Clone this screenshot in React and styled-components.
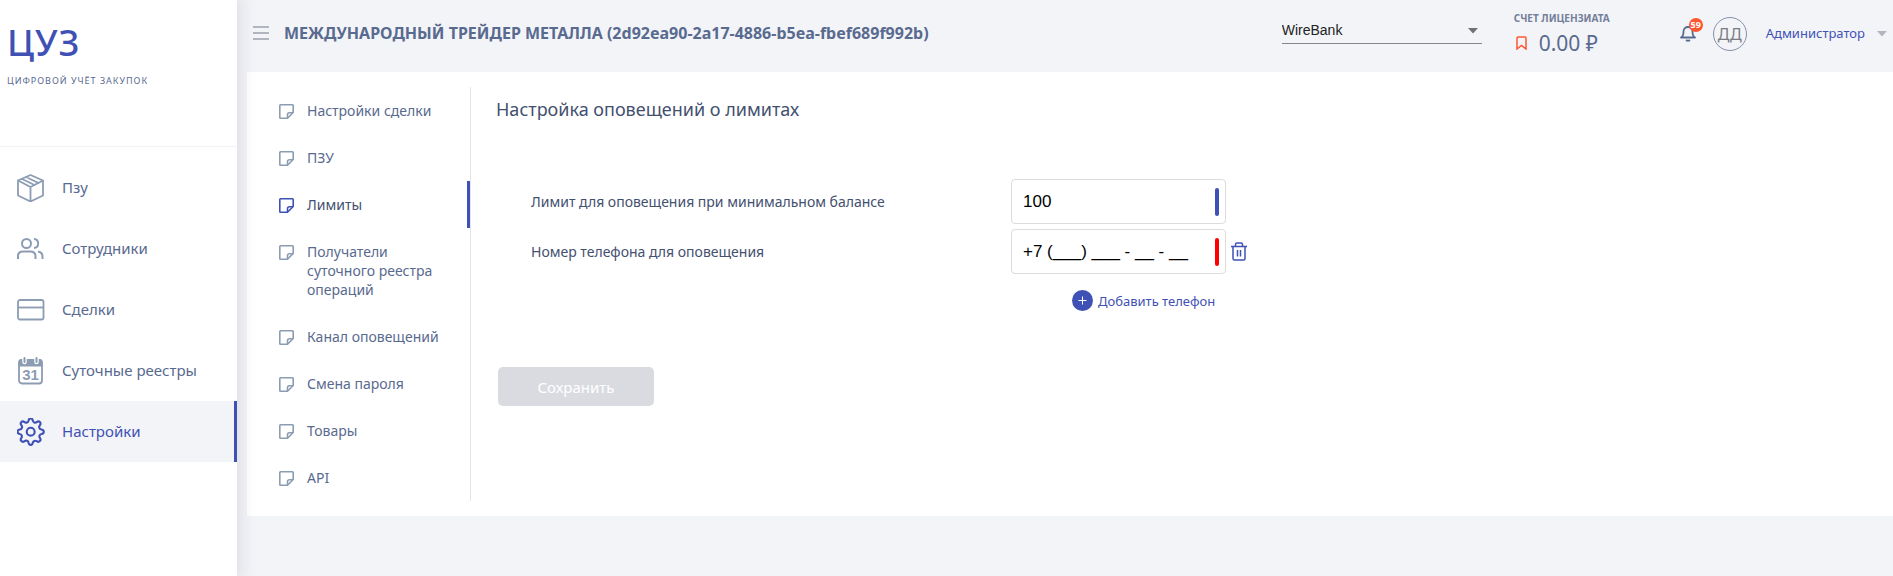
import React, {useState} from 'react';
import styled, { createGlobalStyle } from 'styled-components';

const blue = '#3f51b5';
const slate = '#596a8f';
const dark = '#43506f';
const grey = '#8b9cb3';
const pageBg = '#f3f4f8';

const GlobalStyle = createGlobalStyle`
  * {
    box-sizing: border-box;
  }
  body {
    margin: 0;
    background: ${pageBg};
    color: ${slate};
    font-family: 'Noto Sans', 'Open Sans', sans-serif;
    font-size: 14px;
    line-height: 19px;
  }
  button, input, select {
    font-family: inherit;
  }
  a {
    color: inherit;
    text-decoration: none;
  }
`;

const Layout = styled.div`
  display: flex;
  min-height: 100vh;
`;

const Sidebar = styled.aside`
  position: relative;
  z-index: 1;
  flex: 0 0 237px;
  background: #fff;
  box-shadow: 0 0 16px 5px rgba(30, 30, 40, 0.09);
`;

const Brand = styled.div`
  height: 147px;
  padding: 19px 7px 0;
  border-bottom: 1px solid #f2f3f6;
`;

const Logo = styled.div`
  color: ${blue};
  font-size: 36px;
  font-weight: 500;
  line-height: 48px;
  letter-spacing: 1px;
`;

const Slogan = styled.div`
  margin-top: 4px;
  font-size: 9px;
  letter-spacing: 1px;
  text-transform: uppercase;
`;

const Menu = styled.nav`
  padding-top: 10px;
`;

const MenuItem = styled.a`
  display: flex;
  align-items: center;
  gap: 17px;
  height: 61px;
  padding-left: 17px;
  font-size: 15px;
  color: ${props => props.$active ? blue : slate};
  background: ${props => props.$active ? pageBg : 'none'};
  border-right: 3px solid ${props => props.$active ? blue : 'transparent'};

  svg {
    width: 28px;
    height: 28px;
    color: ${props => props.$active ? blue : grey};
  }
`;

const Main = styled.main`
  flex: 1;
  min-width: 0;
  padding-left: 10px;
`;

const TopBar = styled.header`
  display: flex;
  align-items: flex-start;
  height: 72px;
  padding-right: 6px;
`;

const Burger = styled.button`
  display: flex;
  margin: 26px 15px 0 6px;
  padding: 0;
  border: 0;
  background: none;
  color: #b0b5c0;
`;

const Company = styled.h1`
  flex: 1;
  margin: 24px 0 0;
  font-size: 16px;
  font-weight: 700;
  line-height: 19px;
  white-space: nowrap;
`;

const BankField = styled.div`
  position: relative;
  width: 200px;
  margin-top: 16px;

  svg {
    position: absolute;
    top: 12px;
    right: 4px;
    pointer-events: none;
  }
`;

const BankSelect = styled.select`
  width: 100%;
  height: 28px;
  padding: 0 24px 0 0;
  appearance: none;
  border: 0;
  border-bottom: 1px solid #85878c;
  background: none;
  color: #222;
  font-family: 'Liberation Sans', sans-serif;
  font-size: 14px;
`;

const Account = styled.div`
  width: 166px;
  margin: 10px 0 0 32px;
`;

const AccountTitle = styled.div`
  color: #747f9b;
  font-size: 10px;
  font-weight: 700;
  line-height: 16px;
`;

const Balance = styled.div`
  display: flex;
  align-items: center;
  gap: 12px;
  padding-left: 2px;
  font-size: 21px;
  line-height: 34px;
`;

const Bell = styled.button`
  position: relative;
  display: flex;
  margin-top: 24px;
  padding: 0;
  border: 0;
  background: none;
  color: ${slate};
`;

const Badge = styled.span`
  position: absolute;
  top: -6px;
  right: -7px;
  width: 14px;
  height: 14px;
  border-radius: 50%;
  background: #ff5630;
  color: #fff;
  font-size: 9px;
  font-weight: 700;
  line-height: 14px;
  text-align: center;
`;

const Avatar = styled.span`
  width: 34px;
  height: 34px;
  margin: 17px 19px 0 17px;
  border: 1px solid #8790ab;
  border-radius: 50%;
  color: #7a7c83;
  font-size: 16px;
  line-height: 32px;
  text-align: center;
`;

const UserButton = styled.button`
  display: flex;
  align-items: center;
  gap: 12px;
  margin-top: 24px;
  padding: 0;
  border: 0;
  background: none;
  color: ${blue};
  font-size: 13px;
  line-height: 19px;
`;

const Panel = styled.section`
  display: flex;
  padding: 15px 0;
  background: #fff;
`;

const SubMenu = styled.nav`
  flex: 0 0 224px;
  border-right: 1px solid #e3e4e8;
`;

const SubItem = styled.a`
  display: flex;
  gap: 13px;
  padding: 14px 24px 14px 32px;
  color: ${props => props.$active ? dark : slate};
  border-right: 3px solid ${props => props.$active ? blue : 'transparent'};

  svg {
    flex: none;
    margin-top: 3px;
    color: ${props => props.$active ? blue : grey};
  }
`;

const Content = styled.form`
  flex: 1;
  padding: 12px 25px 0;
  color: ${dark};
`;

const Title = styled.h2`
  margin: 0 0 60px;
  font-size: 18px;
  font-weight: 400;
  line-height: 20px;
`;

const Row = styled.div`
  display: grid;
  grid-template-columns: 480px 215px auto;
  align-items: center;
  justify-content: start;
  margin-bottom: 5px;
  padding-left: 35px;
`;

const Field = styled.div`
  position: relative;

  &::after {
    content: '';
    position: absolute;
    top: 9px;
    right: 7px;
    width: 4px;
    height: 28px;
    border-radius: 2px;
    background: ${props => props.$invalid ? '#f00' : blue};
  }
`;

const TextInput = styled.input`
  display: block;
  width: 100%;
  height: 45px;
  padding: 0 20px 0 11px;
  border: 1px solid #dcdcde;
  border-radius: 4px;
  background: #fff;
  color: #000;
  font-family: 'Liberation Sans', sans-serif;
  font-size: 17px;
`;

const TrashButton = styled.button`
  display: flex;
  padding: 0 0 0 5px;
  border: 0;
  background: none;
  color: ${blue};
`;

const AddButton = styled.button`
  display: flex;
  align-items: center;
  gap: 5px;
  margin: 16px 0 0 576px;
  padding: 0;
  border: 0;
  background: none;
  color: ${blue};
  font-size: 13px;
  line-height: 20px;
`;

const SaveButton = styled.button`
  display: block;
  width: 156px;
  height: 39px;
  margin: 56px 0 0 2px;
  border: 0;
  border-radius: 5px;
  background: #dadbe0;
  color: #fff;
  font-size: 15px;
`;

const PackageIcon = () => (
  <svg viewBox="0 0 28 28" fill="none" stroke="currentColor" strokeWidth="1.800" strokeLinejoin="round" strokeLinecap="round">
    <path d="M13.500 1L26 6.500v15L13.500 27.500 1 21.500v-15zM1 6.500L13.500 13 26 6.500M13.500 13v14M5 5l12.500 6M9 3l12.500 6"/>
  </svg>
);

const UsersIcon = () => (
  <svg viewBox="0 0 28 28" fill="none" stroke="currentColor" strokeWidth="2">
    <circle cx="9.500" cy="8.500" r="4.500"/>
    <path d="M1 24v-3c0-3 2-4.500 5-4.500h7c3 0 5.500 1.500 5.500 4.500v3M17 4c5.500.5 5.500 8.500 0 9M21 16.500c3 .5 4.500 2 4.500 5V24"/>
  </svg>
);

const CardIcon = () => (
  <svg viewBox="0 0 28 28" fill="none" stroke="currentColor" strokeWidth="1.800">
    <rect x="1" y="4" width="25.500" height="19.500" rx="2"/>
    <path d="M1 11.500h25.500"/>
  </svg>
);

const CalendarIcon = () => (
  <svg viewBox="0 0 28 28" fill="none" stroke="currentColor">
    <rect x="2" y="3" width="23" height="23.500" rx="3" strokeWidth="1.800"/>
    <path d="M1.500 9.500V5q0-3 3-3h18q3 0 3 3v4.500z" fill="currentColor" stroke="none"/>
    <path d="M7.500 0v5M19.500 0v5" stroke="#fff" strokeWidth="4.500" strokeLinecap="round"/>
    <path d="M7.500 1v4M19.500 1v4" strokeWidth="2" strokeLinecap="round"/>
    <text x="13.500" y="23" textAnchor="middle" fill="currentColor" stroke="none" fontFamily="Liberation Sans" fontWeight="700" fontSize="15">31</text>
  </svg>
);

// wavy outline of the cog, eight teeth
const GearIcon = () => (
  <svg viewBox="1 1 22.500 22.500" fill="none" stroke="currentColor" strokeWidth="1.700" strokeLinejoin="round">
    <circle cx="12" cy="12" r="3.200"/>
    <path d="M10.300 3.100c.4-2.400 3-2.400 3.400 0a2 2 0 0 0 3.100 1.200c2-1.400 4 .5 2.600 2.500a2 2 0 0 0 1.300 3.400c2.400.4 2.400 3.200 0 3.600a2 2 0 0 0-1.300 3.200c1.400 2-.6 4-2.600 2.600a2 2 0 0 0-3.100 1.300c-.4 2.400-3 2.400-3.400 0a2 2 0 0 0-3.200-1.300c-2 1.400-4-.6-2.600-2.600a2 2 0 0 0-1.300-3.200c-2.400-.4-2.400-3.200 0-3.600a2 2 0 0 0 1.300-3.400c-1.400-2 .6-3.900 2.600-2.500a2 2 0 0 0 3.200-1.200z"/>
  </svg>
);

const NoteIcon = () => (
  <svg width="15" height="15" viewBox="0 0 15 15" fill="none" stroke="currentColor" strokeWidth="1.600" strokeLinejoin="round">
    <path d="M1.500.8h12q.7 0 .7.700V8.500L8.500 14.200h-7q-.7 0-.7-.7v-12q0-.7.7-.7z"/>
    <path d="M14 8.700h-3.500q-2 0-2 2V14"/>
  </svg>
);

const Arrow = ({color}) => (
  <svg width="10" height="6" viewBox="0 0 10 6"><path d="M0 0h10L5 5.500z" fill={color}/></svg>
);

const menu = [
  {name: 'Пзу', icon: PackageIcon},
  {name: 'Сотрудники', icon: UsersIcon},
  {name: 'Сделки', icon: CardIcon},
  {name: 'Суточные реестры', icon: CalendarIcon},
  {name: 'Настройки', icon: GearIcon, active: true},
];

const sections = [
  'Настройки сделки',
  'ПЗУ',
  'Лимиты',
  'Получатели суточного реестра операций',
  'Канал оповещений',
  'Смена пароля',
  'Товары',
  'API',
];

const App = () => {
  const [section, setSection] = useState('Лимиты');
  const [limit, setLimit] = useState('100');
  const [phone, setPhone] = useState('+7 (___) ___ - __ - __');

  return (
    <Layout>
      <GlobalStyle />
      <Sidebar>
        <Brand>
          <Logo>ЦУЗ</Logo>
          <Slogan>Цифровой учёт закупок</Slogan>
        </Brand>
        <Menu>
          {menu.map(({name, icon: Icon, active}) => (
            <MenuItem key={name} href="#" $active={active}><Icon />{name}</MenuItem>
          ))}
        </Menu>
      </Sidebar>
      <Main>
        <TopBar>
          <Burger type="button" aria-label="Меню">
            <svg width="16" height="14" viewBox="0 0 16 14" stroke="currentColor" strokeWidth="2"><path d="M0 1h16M0 7h16M0 13h16"/></svg>
          </Burger>
          <Company>МЕЖДУНАРОДНЫЙ ТРЕЙДЕР МЕТАЛЛА (2d92ea90-2a17-4886-b5ea-fbef689f992b)</Company>
          <BankField>
            <BankSelect aria-label="Банк">
              <option>WireBank</option>
            </BankSelect>
            <Arrow color="#6f7072" />
          </BankField>
          <Account>
            <AccountTitle>СЧЕТ ЛИЦЕНЗИАТА</AccountTitle>
            <Balance>
              <svg width="11" height="14" viewBox="0 0 11 14" fill="none" stroke="#ff5630" strokeWidth="1.500"><path d="M1 13V2q0-1 1-1h7q1 0 1 1v11L5.500 9.500z"/></svg>
              0.00 ₽
            </Balance>
          </Account>
          <Bell type="button" aria-label="Уведомления">
            <svg width="16" height="18" viewBox="0 0 16 18" fill="none" stroke="currentColor" strokeWidth="1.800" strokeLinejoin="round"><path d="M1 13.500c2-1 2.500-2.500 2.500-6 0-6 9-6 9 0 0 3.500.5 5 2.500 6zM6 16q2 1.500 4 0"/></svg>
            <Badge>59</Badge>
          </Bell>
          <Avatar>ДД</Avatar>
          <UserButton type="button">Администратор<Arrow color="#b0b5c0" /></UserButton>
        </TopBar>
        <Panel>
          <SubMenu>
            {sections.map(name => (
              <SubItem key={name} href="#" $active={name === section} onClick={() => setSection(name)}>
                <NoteIcon />
                {name}
              </SubItem>
            ))}
          </SubMenu>
          <Content>
            <Title>Настройка оповещений о лимитах</Title>
            <Row>
              <label htmlFor="limit">Лимит для оповещения при минимальном балансе</label>
              <Field>
                <TextInput id="limit" value={limit} onChange={e => setLimit(e.target.value)} />
              </Field>
            </Row>
            <Row>
              <label htmlFor="phone">Номер телефона для оповещения</label>
              <Field $invalid>
                <TextInput id="phone" value={phone} onChange={e => setPhone(e.target.value)} />
              </Field>
              <TrashButton type="button" aria-label="Удалить телефон">
                <svg width="16" height="19" viewBox="0 0 16 19" fill="none" stroke="currentColor" strokeWidth="1.500"><path d="M0 4.500h16M4.500 4.500v-2q0-1.500 1.500-1.500h4q1.500 0 1.500 1.500v2M2 4.500v12q0 1.500 1.500 1.500h9q1.500 0 1.500-1.500v-12M6.500 8v6.500M9.500 8v6.500"/></svg>
              </TrashButton>
            </Row>
            <AddButton type="button">
              <svg width="21" height="21" viewBox="0 0 21 21"><circle cx="10.500" cy="10.500" r="10.500" fill={blue}/><path d="M10.500 6.500v8M6.500 10.500h8" stroke="#fff"/></svg>
              Добавить телефон
            </AddButton>
            <SaveButton type="button" disabled>Сохранить</SaveButton>
          </Content>
        </Panel>
      </Main>
    </Layout>
  );
};

export default App;
